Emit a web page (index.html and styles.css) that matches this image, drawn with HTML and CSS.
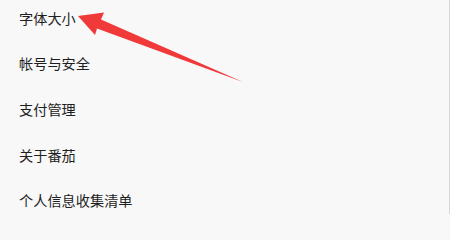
FILE: index.html
```html
<!DOCTYPE html>
<html lang="zh">
<head>
<meta charset="utf-8">
<link rel="stylesheet" href="styles.css">
</head>
<body>
<div class="page">
  <ul class="menu">
    <li class="item">字体大小</li>
    <li class="item">帐号与安全</li>
    <li class="item">支付管理</li>
    <li class="item">关于番茄</li>
    <li class="item">个人信息收集清单</li>
  </ul>
  <svg class="arrow" width="450" height="214" viewBox="0 0 450 214">
    <polygon points="78,16 104,12.5 101,19.5 243,82 97,28.5 95,35" fill="#f03a3a"/>
  </svg>
</div>
</body>
</html>
```
FILE: styles.css
```css
html, body {
  margin: 0;
  padding: 0;
  width: 450px;
  height: 214px;
  overflow: hidden;
  background: #f8f8f8;
}
.page {
  position: relative;
  width: 449px;
  height: 214px;
  overflow: hidden;
  border-right: 1px solid #d8d8d8;
  background: #f8f8f8;
}
.menu {
  list-style: none;
  margin: -5px 0 0 0;
  padding: 0 0 0 19px;
}
.item {
  height: 45.6px;
  display: flex;
  align-items: center;
  font-family: "Noto Sans CJK SC", sans-serif;
  font-size: 14.2px;
  color: #1e1e1e;
}
.arrow {
  position: absolute;
  left: 0;
  top: 0;
}
```
